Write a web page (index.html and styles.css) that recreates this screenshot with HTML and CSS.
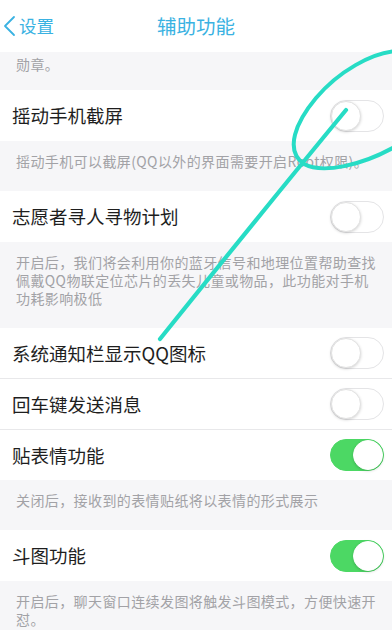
FILE: index.html
```html
<!DOCTYPE html>
<html lang="zh-CN">
<head>
<meta charset="utf-8">
<title>辅助功能</title>
<link rel="stylesheet" href="styles.css">
</head>
<body>
<div class="screen">
  <header class="nav">
    <div class="back">
      <svg class="chev" width="14" height="22" viewBox="0 0 14 22"><path d="M11 2 L2 11 L11 20" fill="none" stroke="#3ab2e2" stroke-width="1.8" stroke-linecap="round" stroke-linejoin="round"/></svg>
      <span>设置</span>
    </div>
    <div class="title">辅助功能</div>
  </header>

  <div class="desc top">勋章。</div>

  <div class="row"><span class="label">摇动手机截屏</span><span class="switch"><span class="knob"></span></span></div>
  <div class="desc">摇动手机可以截屏(QQ以外的界面需要开启Root权限)。</div>

  <div class="row"><span class="label">志愿者寻人寻物计划</span><span class="switch"><span class="knob"></span></span></div>
  <div class="desc">开启后，我们将会利用你的蓝牙信号和地理位置帮助查找<br>佩戴QQ物联定位芯片的丢失儿童或物品，此功能对手机<br>功耗影响极低</div>

  <div class="group">
    <div class="row"><span class="label">系统通知栏显示QQ图标</span><span class="switch"><span class="knob"></span></span></div>
    <div class="row"><span class="label">回车键发送消息</span><span class="switch"><span class="knob"></span></span></div>
    <div class="row"><span class="label">贴表情功能</span><span class="switch on"><span class="knob"></span></span></div>
  </div>
  <div class="desc">关闭后，接收到的表情贴纸将以表情的形式展示</div>

  <div class="row"><span class="label">斗图功能</span><span class="switch on"><span class="knob"></span></span></div>
  <div class="desc">开启后，聊天窗口连续发图将触发斗图模式，方便快速开<br>怼。</div>

  <svg class="ink" width="392" height="630" viewBox="0 0 392 630">
    <path d="M398 51 C372 52 338 72 316 98 C296 122 284 150 304 164 C322 174 362 166 398 145" fill="none" stroke="#27dcc5" stroke-width="4" stroke-linecap="round"/>
    <path d="M346 110 Q 262 212 160 339" fill="none" stroke="#27dcc5" stroke-width="4.2" stroke-linecap="round"/>
  </svg>
</div>
</body>
</html>
```

FILE: styles.css
```css
* { box-sizing: border-box; }
html, body { margin: 0; padding: 0; }
body {
  width: 392px;
  height: 630px;
  overflow: hidden;
  background: #f6f6f8;
  font-family: "Noto Sans CJK SC", "Noto Sans", sans-serif;
}
.screen {
  position: relative;
  width: 392px;
  height: 630px;
  overflow: hidden;
  background: #f6f6f8;
}
.nav {
  position: relative;
  height: 52px;
  background: #ffffff;
  display: flex;
  align-items: center;
  justify-content: center;
}
.back {
  position: absolute;
  left: 3px;
  top: 0;
  height: 52px;
  display: flex;
  align-items: center;
  gap: 2px;
  color: #3ab2e2;
  font-size: 17.5px;
}
.back span { line-height: 1; }
.title {
  color: #3ab2e2;
  font-size: 19.5px;
  line-height: 1;
}
.desc {
  padding: 11px 10px 21px 16px;
  font-size: 14px;
  letter-spacing: 0.4px;
  line-height: 18px;
  color: #a2a2a6;
}
.desc.top {
  padding-top: 3px;
  padding-bottom: 17px;
}
.row {
  height: 51px;
  background: #ffffff;
  display: flex;
  align-items: center;
  justify-content: space-between;
  padding: 0 8px 0 12px;
}
.group .row { height: 50px; }
.group .row + .row {
  height: 51px;
  border-top: 1px solid #e8e8ea;
}
.group .row:last-child { height: 51px; }
.label {
  font-size: 18.5px;
  color: #1e1e1e;
  line-height: 1;
}
.switch {
  width: 54px;
  height: 32px;
  border-radius: 16px;
  border: 1.5px solid #e4e4e6;
  background: #ffffff;
  display: flex;
  align-items: center;
  justify-content: flex-start;
}
.knob {
  width: 30px;
  height: 30px;
  border-radius: 50%;
  background: #ffffff;
  border: 1px solid #e2e2e2;
  box-shadow: 0 1px 3px rgba(0,0,0,0.18);
}
.switch.on {
  background: #4cd864;
  border-color: #4cd864;
  justify-content: flex-end;
}
.switch.on .knob { border-color: #ffffff; }
.ink {
  position: absolute;
  left: 0;
  top: 0;
  pointer-events: none;
}
```
